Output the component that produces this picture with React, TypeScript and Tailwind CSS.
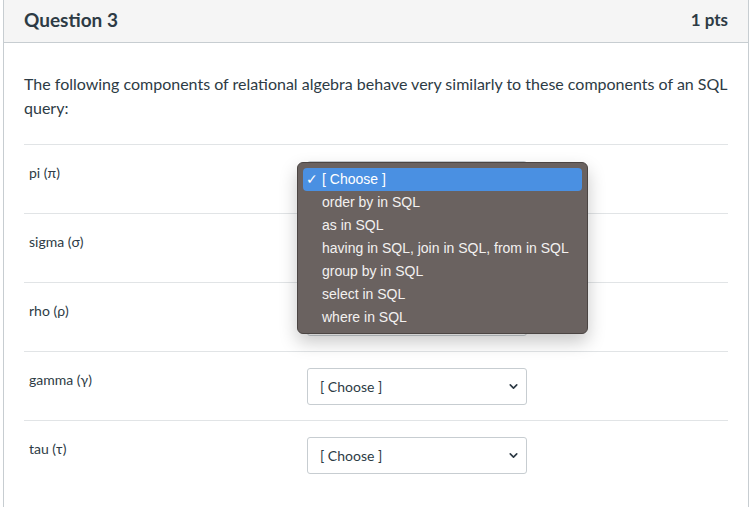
import { ChevronDown } from "lucide-react"

const rows = [
    { label: "pi (π)" },
    { label: "sigma (σ)" },
    { label: "rho (ρ)" },
    { label: "gamma (γ)" },
    { label: "tau (τ)" },
]

const options = [
    "[ Choose ]",
    "order by in SQL",
    "as in SQL",
    "having in SQL, join in SQL, from in SQL",
    "group by in SQL",
    "select in SQL",
    "where in SQL",
]

function ChooseBox() {
    return (
        <div className="w-[220px] h-[37px] rounded-[3px] border border-[#c7cdd1] bg-white flex items-center justify-between pl-[12px] pr-[6px] text-[14px] text-[#2d3b45]">
            <span>[ Choose ]</span>
            <ChevronDown size={13} strokeWidth={3} className="text-[#2d3b45]" />
        </div>
    )
}

function OpenMenu() {
    return (
        <div className="absolute left-[-10px] top-[17px] z-10 w-[291px] h-[172px] rounded-[6px] border border-[#4b4543] bg-[#6a6260] pt-[5px] px-[5px] shadow-[0_8px_18px_rgba(0,0,0,0.22)] font-['Liberation_Sans',Arial,sans-serif] text-[14px] text-[#f3f1f0]">
            {options.map((opt, i) => (
                <div
                    key={opt}
                    className={
                        i === 0
                            ? "relative h-[23px] leading-[23px] pl-[19px] rounded-[4px] bg-[#4a90e2] text-white"
                            : "relative h-[23px] leading-[23px] pl-[19px]"
                    }
                >
                    {i === 0 && <span className="absolute left-[3px] top-0">✓</span>}
                    {opt}
                </div>
            ))}
        </div>
    )
}

export default function App() {
    return (
        <div className="w-full min-h-screen bg-white font-['Lato','Open_Sans',sans-serif] text-[#2d3b45]">
            <div className="ml-[3px] w-[746px] min-h-[507px] border-x border-[#c7cdd1]">
                <header className="h-[43px] bg-[#f5f5f5] border-b border-[#c7cdd1] flex items-center justify-between px-[20px] pb-[2px]">
                    <h2 className="text-[19px] font-bold">Question 3</h2>
                    <span className="text-[17px] font-bold">1 pts</span>
                </header>
                <section className="px-[20px] pt-[29px]">
                    <p className="text-[16px] leading-[24px] mb-[24px]">
                        The following components of relational algebra behave very similarly to these components of an SQL query:
                    </p>
                    <div>
                        {rows.map((row, i) => (
                            <div key={row.label} className="h-[69px] border-t border-[#e1e4e6] flex">
                                <div className="w-[283px] pl-[5px] pt-[18px] text-[14px] leading-[20px]">{row.label}</div>
                                <div className="relative pt-[16px]">
                                    <ChooseBox />
                                    {i === 0 && <OpenMenu />}
                                </div>
                            </div>
                        ))}
                    </div>
                </section>
            </div>
        </div>
    )
}
